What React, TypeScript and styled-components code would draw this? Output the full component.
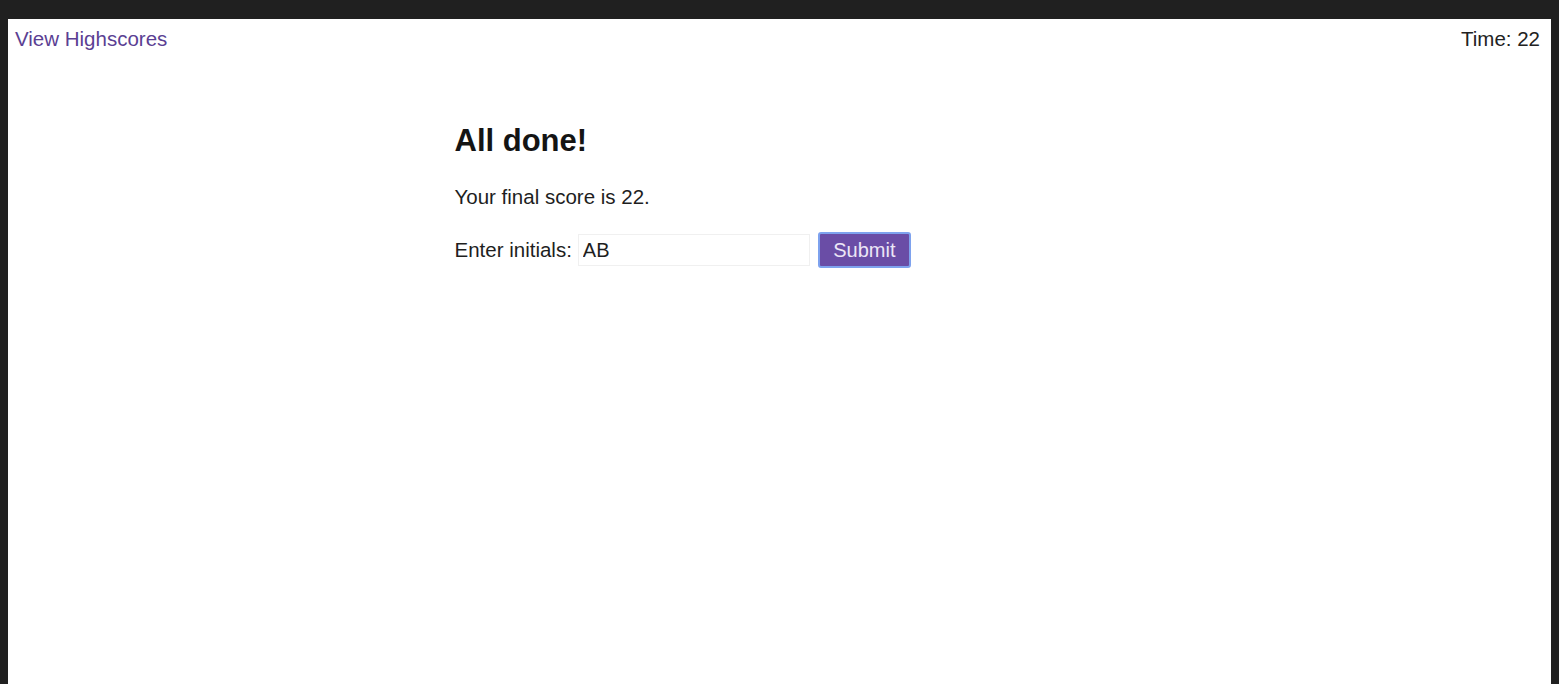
import React, { useState } from "react";
import styled, { createGlobalStyle } from "styled-components";

const GlobalStyle = createGlobalStyle`
  html, body {
    margin: 0;
    padding: 0;
    background: #202020;
    font-family: "Liberation Sans", Arial, sans-serif;
  }
`;

const Frame = styled.div`
  box-sizing: border-box;
  height: 684px;
  padding: 19px 8px 0 8px;
  background: #202020;
`;

const Page = styled.div`
  height: 100%;
  background: #ffffff;
  color: #1a1a1a;
`;

const Header = styled.header`
  display: flex;
  justify-content: space-between;
  align-items: center;
  padding: 8px 11px 8px 7px;
  font-size: 20.5px;
  line-height: 23px;
`;

const HighscoreLink = styled.a`
  color: #5b3f93;
  text-decoration: none;
  cursor: pointer;
`;

const Timer = styled.span`
  color: #222;
`;

const Main = styled.main`
  width: 650px;
  margin: 66px auto 0;
`;

const Title = styled.h1`
  margin: 0;
  font-size: 31px;
  line-height: 34px;
  font-weight: 700;
  color: #141414;
`;

const Score = styled.p`
  margin: 27px 0 0;
  font-size: 20.5px;
  line-height: 23px;
  color: #1e1e1e;
`;

const Form = styled.form`
  display: flex;
  align-items: center;
  margin-top: 24px;
  font-size: 20.5px;
  color: #1e1e1e;
`;

const Label = styled.label`
  margin-right: 6px;
`;

const Input = styled.input`
  box-sizing: border-box;
  width: 232px;
  height: 32px;
  padding: 0 4px;
  border: 1px solid #f0f0f0;
  outline: none;
  font-family: inherit;
  font-size: 20px;
  color: #1e1e1e;
  background: #fff;
`;

const Button = styled.button`
  box-sizing: border-box;
  margin-left: 8px;
  width: 93px;
  height: 36px;
  padding: 0;
  border: 2px solid #7ea2ee;
  border-radius: 3px;
  background: #6a4da6;
  color: #ece6f6;
  font-family: inherit;
  font-size: 20px;
  cursor: pointer;
`;

export default function App() {
  const [initials, setInitials] = useState("AB");

  return (
    <>
      <GlobalStyle />
      <Frame>
        <Page>
          <Header>
            <HighscoreLink>View Highscores</HighscoreLink>
            <Timer>Time: 22</Timer>
          </Header>
          <Main>
            <Title>All done!</Title>
            <Score>Your final score is 22.</Score>
            <Form onSubmit={(e) => e.preventDefault()}>
              <Label htmlFor="initials">Enter initials:</Label>
              <Input
                id="initials"
                value={initials}
                onChange={(e) => setInitials(e.target.value)}
              />
              <Button type="submit">Submit</Button>
            </Form>
          </Main>
        </Page>
      </Frame>
    </>
  );
}
